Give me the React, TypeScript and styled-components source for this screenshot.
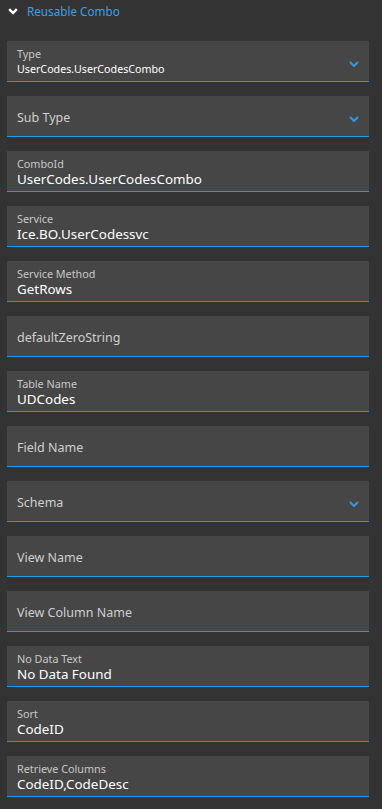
import React from "react";
import styled, { createGlobalStyle } from "styled-components";

const GlobalStyle = createGlobalStyle`
  html, body {
    margin: 0;
    padding: 0;
    background: #333333;
  }
  body {
    font-family: "Noto Sans", "Open Sans", sans-serif;
  }
`;

interface FieldDef {
  label: string;
  value?: string;
  dropdown?: boolean;
}

const fields: FieldDef[] = [
  { label: "Type", value: "UserCodes.UserCodesCombo", dropdown: true },
  { label: "Sub Type", dropdown: true },
  { label: "ComboId", value: "UserCodes.UserCodesCombo" },
  { label: "Service", value: "Ice.BO.UserCodessvc" },
  { label: "Service Method", value: "GetRows" },
  { label: "defaultZeroString" },
  { label: "Table Name", value: "UDCodes" },
  { label: "Field Name" },
  { label: "Schema", dropdown: true },
  { label: "View Name" },
  { label: "View Column Name" },
  { label: "No Data Text", value: "No Data Found" },
  { label: "Sort", value: "CodeID" },
  { label: "Retrieve Columns", value: "CodeID,CodeDesc" },
];

const Panel = styled.div`
  width: 382px;
  min-height: 809px;
  background: #333333;
  box-sizing: border-box;
  padding: 0 13px 12px 7px;
`;

const Header = styled.div`
  display: flex;
  align-items: center;
  height: 22px;
  margin-bottom: 19px;
  gap: 9px;
  padding-left: 1px;
  color: #3aa0e8;
  font-size: 11.7px;
`;

const List = styled.div`
  display: flex;
  flex-direction: column;
  gap: 14px;
`;

const Box = styled.div`
  position: relative;
  box-sizing: border-box;
  height: 41px;
  background: #464646;
  border-bottom: 1px solid #1e9be9;
  display: flex;
  flex-direction: column;
  padding: 6px 30px 0 10px;
`;

const Label = styled.div`
  font-size: 10.8px;
  line-height: 14px;
  color: #c8c8c8;
  white-space: nowrap;
`;

const Value = styled.div<{ $small?: boolean }>`
  font-size: ${(p) => (p.$small ? "10.7px" : "13.4px")};
  line-height: 17.5px;
  color: #ffffff;
  white-space: nowrap;
`;

const Placeholder = styled.div`
  margin-top: 7px;
  font-size: 12.5px;
  line-height: 17px;
  color: #cfcfcf;
  white-space: nowrap;
`;

const Caret = styled.svg`
  position: absolute;
  right: 10px;
  top: 20px;
`;

const Chevron = styled.svg`
  flex: 0 0 auto;
`;

const Field = ({ label, value, dropdown }: FieldDef) => (
  <Box>
    {value ? (
      <>
        <Label>{label}</Label>
        <Value $small={dropdown}>{value}</Value>
      </>
    ) : (
      <Placeholder>{label}</Placeholder>
    )}
    {dropdown && (
      <Caret width="10" height="6" viewBox="0 0 10 6" fill="none">
        <path d="M1 1 L5 5 L9 1" stroke="#2b9be6" strokeWidth="2" />
      </Caret>
    )}
  </Box>
);

const App = () => (
  <>
    <GlobalStyle />
    <Panel>
      <Header>
        <Chevron width="10" height="7" viewBox="0 0 10 7" fill="none">
          <path d="M1.2 1.2 L5 5 L8.8 1.2" stroke="#ffffff" strokeWidth="2.4" />
        </Chevron>
        <span>Reusable Combo</span>
      </Header>
      <List>
        {fields.map((f) => (
          <Field key={f.label} {...f} />
        ))}
      </List>
    </Panel>
  </>
);

export default App;
